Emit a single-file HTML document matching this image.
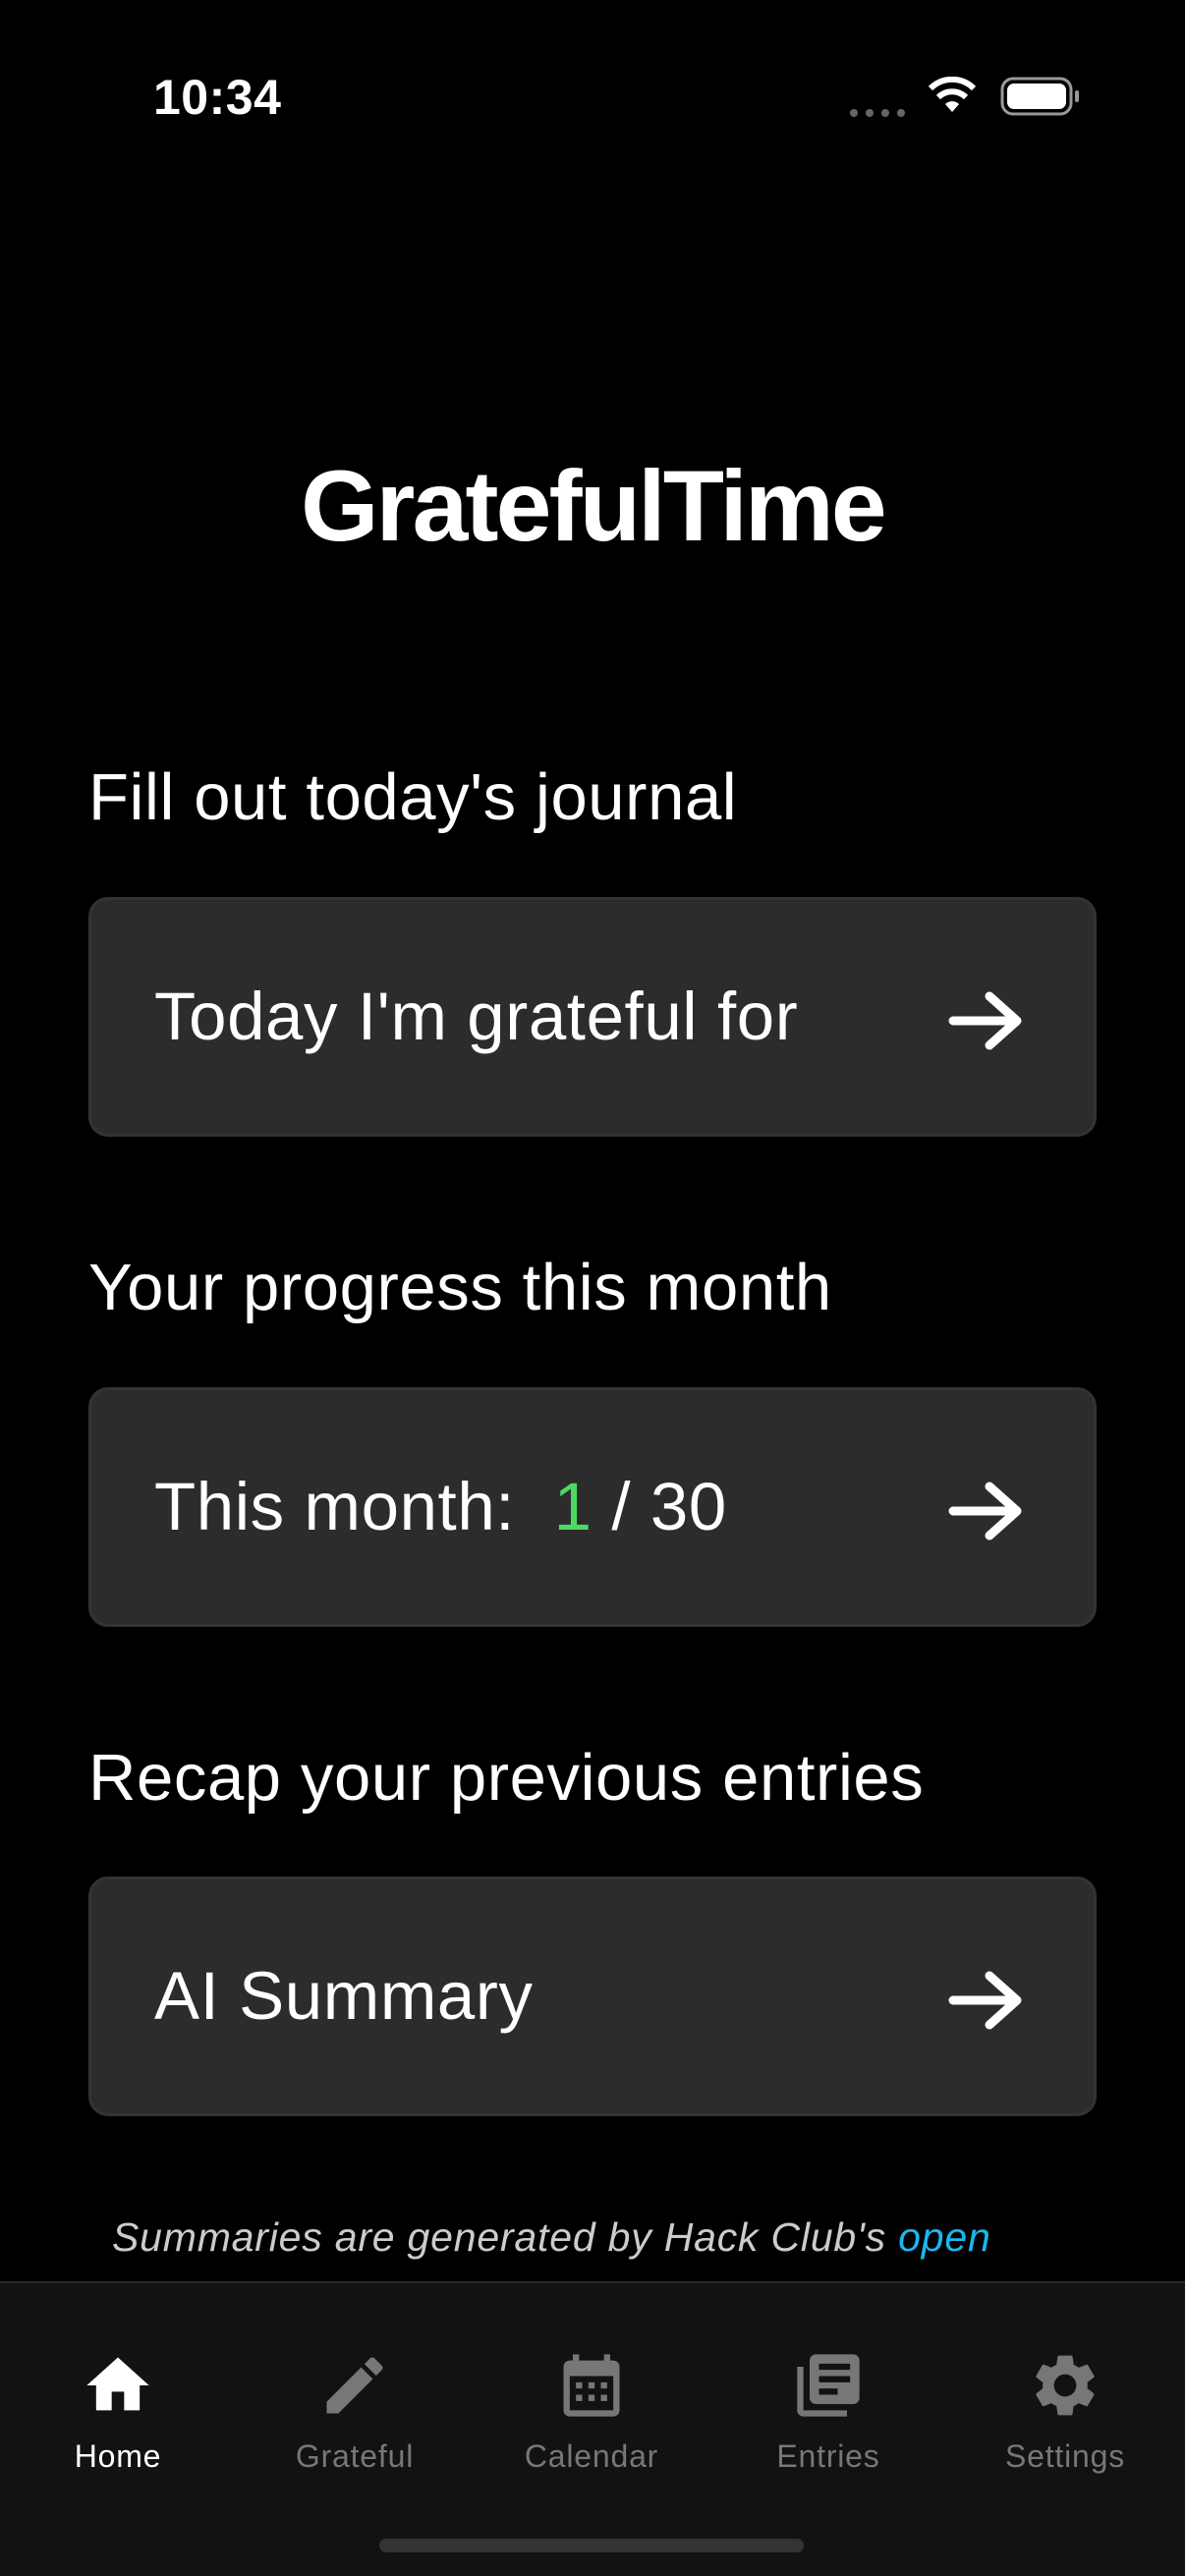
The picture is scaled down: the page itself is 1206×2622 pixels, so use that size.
<!DOCTYPE html>
<html><head><meta charset="utf-8"><style>
*{margin:0;padding:0;box-sizing:border-box}
body{width:1206px;height:2622px;background:#000;color:#fff;font-family:"Liberation Sans",sans-serif;position:relative;overflow:hidden}
.abs{position:absolute}
.time{left:156px;top:70px;font-size:50px;font-weight:bold;letter-spacing:0.5px}
.title{left:0;width:1206px;text-align:center;top:457px;font-size:102px;font-weight:bold;letter-spacing:-2.8px}
.label{left:90px;font-size:67px;letter-spacing:0.6px;line-height:1}
.card{left:90px;width:1026px;height:244px;background:#2c2c2c;border:3px solid #333;border-radius:20px}
.ct{position:absolute;left:64px;top:84px;font-size:69px;letter-spacing:0.6px;line-height:1;font-weight:500}
.arrow{position:absolute;right:72px;top:92px}
.foot{left:114px;top:2254px;font-size:41px;font-style:italic;color:#ccc;letter-spacing:0.8px}
.tab{top:2322px;left:0;width:1206px;height:300px;background:#121212;border-top:2px solid #2a2a2a}
.ti{position:absolute;width:240px;text-align:center;top:0}
.ti svg{position:absolute;left:82px;top:66px}
.ti span{position:absolute;left:0;width:240px;top:158px;font-size:32px;letter-spacing:0.8px;color:#777}
.hb{left:386px;top:2584px;width:432px;height:14px;border-radius:7px;background:#333}
</style></head><body>
<div class="abs time">10:34</div>
<div class="abs" style="left:864px;top:107px">
<svg width="60" height="10"><circle cx="5" cy="5" r="4" fill="#666"/><circle cx="21" cy="5" r="4" fill="#666"/><circle cx="37" cy="5" r="4" fill="#666"/><circle cx="53" cy="5" r="4" fill="#666"/></svg></div>
<svg class="abs" style="left:943px;top:78px" width="52" height="38" viewBox="0 0 52 38"><path d="M26 36 L19 28 A10 10 0 0 1 33 28 Z" fill="#fff"/><path d="M12 21 A20 20 0 0 1 40 21" stroke="#fff" stroke-width="6" fill="none"/><path d="M4 12 A31 31 0 0 1 48 12" stroke="#fff" stroke-width="6" fill="none"/></svg>
<svg class="abs" style="left:1018px;top:78px" width="82" height="40" viewBox="0 0 82 40"><rect x="2" y="2" width="70" height="36" rx="11" stroke="#999" stroke-width="3" fill="none"/><rect x="7" y="7" width="60" height="26" rx="7" fill="#fff"/><rect x="76" y="14" width="4" height="12" rx="2" fill="#999"/></svg>
<div class="abs title">GratefulTime</div>
<div class="abs label" style="top:778px">Fill out today's journal</div>
<div class="abs card" style="top:913px"><div class="ct">Today I'm grateful for</div>
<svg class="arrow" width="76" height="62" viewBox="0 0 76 62"><path d="M5 31 H68 M42 6 L70 31 L42 56" stroke="#fff" stroke-width="9" stroke-linecap="round" stroke-linejoin="round" fill="none"/></svg></div>
<div class="abs label" style="top:1277px">Your progress this month</div>
<div class="abs card" style="top:1412px"><div class="ct">This month:&nbsp;&nbsp;<span style="color:#4cd964">1</span> / 30</div>
<svg class="arrow" width="76" height="62" viewBox="0 0 76 62"><path d="M5 31 H68 M42 6 L70 31 L42 56" stroke="#fff" stroke-width="9" stroke-linecap="round" stroke-linejoin="round" fill="none"/></svg></div>
<div class="abs label" style="top:1776px">Recap your previous entries</div>
<div class="abs card" style="top:1910px"><div class="ct">AI Summary</div>
<svg class="arrow" width="76" height="62" viewBox="0 0 76 62"><path d="M5 31 H68 M42 6 L70 31 L42 56" stroke="#fff" stroke-width="9" stroke-linecap="round" stroke-linejoin="round" fill="none"/></svg></div>
<div class="abs foot">Summaries are generated by Hack Club's <span style="color:#1ab8f0">open</span></div>
<div class="abs tab">
<div class="ti" style="left:0"><svg width="76" height="76" viewBox="0 0 24 24"><path d="M10 20v-6h4v6h5v-8h3L12 3 2 12h3v8z" fill="#fff"/></svg><span style="color:#fff">Home</span></div>
<div class="ti" style="left:241px"><svg width="76" height="76" viewBox="0 0 24 24"><path d="M3 17.25V21h3.75L17.81 9.94l-3.750-3.75L3 17.25zM20.71 7.04a1 1 0 0 0 0-1.41l-2.34-2.34a1 1 0 0 0-1.410 0l-1.83 1.83 3.75 3.75 1.83-1.83z" fill="#777"/></svg><span>Grateful</span></div>
<div class="ti" style="left:482px"><svg width="76" height="76" viewBox="0 0 24 24"><path d="M19 4h-1V2h-2v2H8V2H6v2H5a2 2 0 0 0-2 2v14a2 2 0 0 0 2 2h14a2 2 0 0 0 2-2V6a2 2 0 0 0-2-2zm0 16H5V9h14v11zM7 11h2v2H7zm4 0h2v2h-2zm4 0h2v2h-2zM7 15h2v2H7zm4 0h2v2h-2zm4 0h2v2h-2z" fill="#777"/></svg><span>Calendar</span></div>
<div class="ti" style="left:723px"><svg width="76" height="76" viewBox="0 0 24 24"><path d="M4 6H2v14a2 2 0 0 0 2 2h14v-2H4V6zm16-4H8a2 2 0 0 0-2 2v12a2 2 0 0 0 2 2h12a2 2 0 0 0 2-2V4a2 2 0 0 0-2-2zm-1 9H9V9h10v2zm-4 4H9v-2h6v2zm4-8H9V5h10v2z" fill="#777"/></svg><span>Entries</span></div>
<div class="ti" style="left:964px"><svg width="76" height="76" viewBox="0 0 24 24"><path d="M19.14 12.94a7.1 7.1 0 0 0 0-1.88l2.03-1.58a.5.5 0 0 0 .12-.61l-1.92-3.32a.5.5 0 0 0-.59-.22l-2.39.96a7 7 0 0 0-1.62-.94l-.36-2.54A.5.5 0 0 0 13.9 2.4h-3.84a.5.5 0 0 0-.48.41l-.36 2.54c-.59.24-1.130.57-1.62.94l-2.39-.96a.5.5 0 0 0-.59.22L2.7 8.87a.5.5 0 0 0 .12.61l2.03 1.58a7.1 7.1 0 0 0 0 1.88l-2.03 1.58a.5.5 0 0 0-.12.61l1.92 3.32c.12.22.37.3.59.22l2.39-.96c.5.38 1.03.7 1.62.94l.36 2.54c.05.24.25.41.48.41h3.84c.24 0 .44-.17.47-.41l.36-2.54c.59-.24 1.13-.56 1.62-.94l2.39.96c.22.08.47 0 .59-.22l1.92-3.32a.5.5 0 0 0-.12-.61l-2.01-1.58zM12 15.6A3.6 3.6 0 1 1 12 8.4a3.6 3.6 0 0 1 0 7.2z" fill="#777"/></svg><span>Settings</span></div>
</div>
<div class="abs hb"></div>
</body></html>
